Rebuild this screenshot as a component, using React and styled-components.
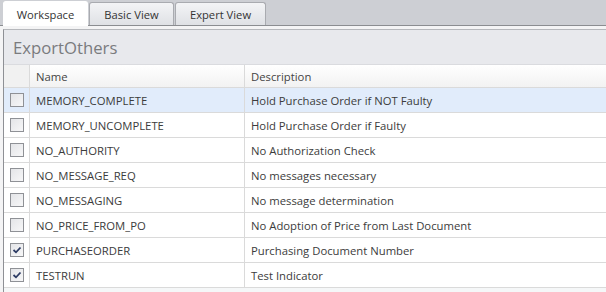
import React from 'react';
import styled, { createGlobalStyle } from 'styled-components';

const Global = createGlobalStyle`
    html, body { margin: 0; padding: 0; background: #f4f4f5; }
    body { font-family: "Open Sans", "Noto Sans", sans-serif; }
`

const Page = styled.div`
    width: 606px;
    height: 292px;
    overflow: hidden;
    display: flex;
    flex-direction: column;
    background: #f4f4f5;
`

const TabStrip = styled.div`
    display: flex;
    align-items: flex-end;
    height: 25px;
    padding-left: 3px;
    background: #cdcfd4;
    border-bottom: 1px solid #8b8d91;
`

const Tab = styled.div`
    box-sizing: border-box;
    width: ${p => p.w}px;
    height: ${p => (p.active ? 25 : 23)}px;
    margin-bottom: ${p => (p.active ? -1 : 0)}px;
    margin-right: 1px;
    display: flex;
    align-items: center;
    justify-content: center;
    font-size: 11.2px;
    color: #333;
    border: 1px solid ${p => (p.active ? '#ffffff' : '#a9abb0')};
    border-bottom: none;
    border-radius: 3px 3px 0 0;
    background: ${p => (p.active ? '#ffffff' : 'linear-gradient(#f3f4f6, #dfe1e5)')};
    padding-top: ${p => (p.active ? 0 : 1)}px;
`

const Body = styled.div`
    flex: 1;
    padding: 3px 0 0 3px;
    background: #f4f4f5;
`

const Panel = styled.div`
    height: 100%;
    border-left: 1px solid #8e9095;
    border-top: 1px solid #b6b8bc;
    background: #f5f7f8;
`

const Title = styled.div`
    height: 34px;
    display: flex;
    align-items: center;
    padding-left: 9px;
    font-size: 16.7px;
    color: #7a7b7e;
    background: #e8e9ed;
    border-bottom: 1px solid #dadbdf;
`

const Row = styled.div`
    display: grid;
    grid-template-columns: 26px 215px 1fr;
    height: ${p => (p.header ? 22 : 24)}px;
    border-bottom: 1px solid #dadada;
    background: ${p => (p.header ? 'linear-gradient(#ffffff, #f2f2f2)' : p.selected ? '#e1ecfb' : '#ffffff')};
`

const Cell = styled.div`
    display: flex;
    align-items: center;
    padding-left: ${p => (p.check ? 0 : 6)}px;
    justify-content: ${p => (p.check ? 'center' : 'flex-start')};
    border-right: ${p => (p.last ? 'none' : '1px solid #dadada')};
    font-size: 11.3px;
    color: ${p => (p.header ? '#444' : '#3c3c3c')};
    background: ${p => (p.checkHead ? '#f1f1f1' : 'transparent')};
    white-space: nowrap;
`

const Box = styled.div`
    box-sizing: border-box;
    width: 14px;
    height: 14px;
    border: 1px solid #8f9196;
    background: linear-gradient(135deg, #e4e5e8, #f7f7f8);
    display: flex;
    align-items: center;
    justify-content: center;
`

const rows = [
    ['MEMORY_COMPLETE', 'Hold Purchase Order if NOT Faulty', false, true],
    ['MEMORY_UNCOMPLETE', 'Hold Purchase Order if Faulty', false],
    ['NO_AUTHORITY', 'No Authorization Check', false],
    ['NO_MESSAGE_REQ', 'No messages necessary', false],
    ['NO_MESSAGING', 'No message determination', false],
    ['NO_PRICE_FROM_PO', 'No Adoption of Price from Last Document', false],
    ['PURCHASEORDER', 'Purchasing Document Number', true],
    ['TESTRUN', 'Test Indicator', true],
];

const Check = ({ on }) => (
    <Box>
        {on && (
            <svg width="10" height="8" viewBox="0 0 10 8">
                <path d="M1.5 4 L4 6.3 L8.5 1.5" fill="none" stroke="#2b3a63" strokeWidth="1.8" />
            </svg>
        )}
    </Box>
);

const App = () => {
    return (
        <Page>
            <Global />
            <TabStrip>
                <Tab active w={85}>Workspace</Tab>
                <Tab w={85}>Basic View</Tab>
                <Tab w={91}>Expert View</Tab>
            </TabStrip>
            <Body>
                <Panel>
                    <Title>ExportOthers</Title>
                    <Row header>
                        <Cell check checkHead />
                        <Cell header>Name</Cell>
                        <Cell header last>Description</Cell>
                    </Row>
                    {rows.map(([name, desc, on, sel]) => (
                        <Row key={name} selected={sel}>
                            <Cell check><Check on={on} /></Cell>
                            <Cell>{name}</Cell>
                            <Cell last>{desc}</Cell>
                        </Row>
                    ))}
                </Panel>
            </Body>
        </Page>
    );
};

export default App;
